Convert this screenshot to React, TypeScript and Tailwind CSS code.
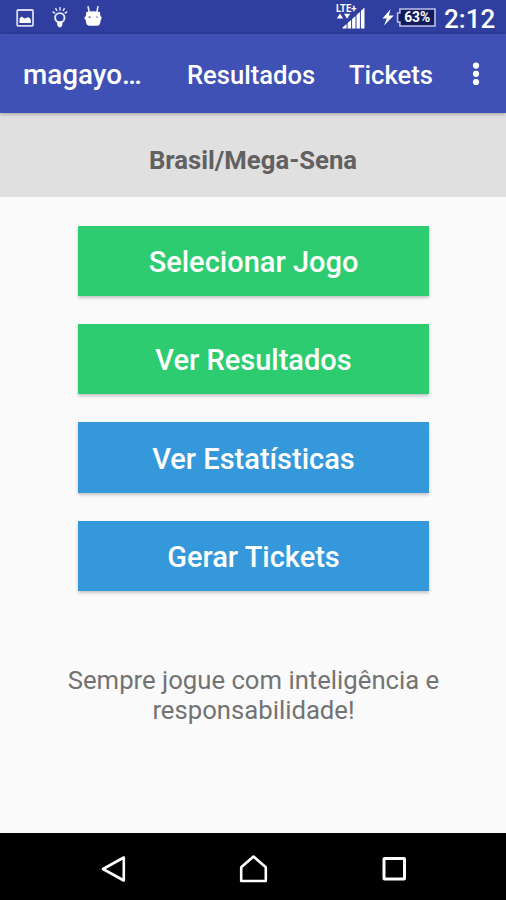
const actions = [
  { label: 'Selecionar Jogo', color: 'bg-[#2ecc71]' },
  { label: 'Ver Resultados', color: 'bg-[#2ecc71]' },
  { label: 'Ver Estatísticas', color: 'bg-[#3498db]' },
  { label: 'Gerar Tickets', color: 'bg-[#3498db]' },
]

function ImageIcon() {
  return (
    <svg className="w-[18px] h-[18px] mt-[9px]" viewBox="0 0 18 18" fill="none">
      <rect x="1.2" y="1" width="15.8" height="15.8" rx="0.8" stroke="#d8d9ef" strokeWidth="1.8" />
      <path d="M3.5 14V9.6L5.8 7.4L8.3 9.6L11.4 8.6L13 8.2L14.8 10.6V14Z" fill="#fff" />
    </svg>
  )
}

function BulbIcon() {
  return (
    <svg className="w-4 h-[22px] mt-[6px]" viewBox="0 0 16 22" fill="none" stroke="#e6ebff">
      <circle cx="7.8" cy="11.8" r="4.7" strokeWidth="1.9" />
      <path d="M8 1V4.4M3.5 2.2L5 5M12.5 2.2L11 5M0.6 5.6L3 7.4M15.2 5.6L12.8 7.4" strokeWidth="1.4" />
      <path d="M5.2 15.5H10.4V19L9 21.2H6.8L5.2 19Z" fill="#fff" stroke="none" />
    </svg>
  )
}

function RobotIcon() {
  return (
    <svg className="w-[18px] h-[22px] mt-[5px]" viewBox="0 0 18 22" fill="none">
      <path d="M4 1.2L5.2 7M14 1.2L12.9 7" stroke="#e6ebff" strokeWidth="1.6" />
      <path
        d="M2.3 7Q9 5.6 16 7L16.4 11Q17.8 11.6 17.6 13.5L16.6 15.5Q16.4 20.8 13 20.8H5.6Q2 20.8 1.8 15.5L0.5 13.5Q0.3 11.6 1.9 11Z"
        fill="#fff"
      />
      <path d="M4.6 12.2H6.4M12.4 12.2H13.6" stroke="#303f9f" strokeWidth="1.3" />
    </svg>
  )
}

function SignalIcon() {
  return (
    <svg className="w-[30px] h-7 mt-[2px]" viewBox="0 0 30 28" fill="#fff">
      <text x="0" y="9.8" fontSize="10.5" fontWeight="700" fontFamily="Roboto, sans-serif" textLength="20.5" lengthAdjust="spacingAndGlyphs">
        LTE+
      </text>
      <path d="M0.8 16.6L4 11.6L7.2 16.6ZM8 11.8L14.2 11.8L11.1 16.8Z" />
      <path d="M6.5 26.5V25.6L10.6 22V26.5ZM11.6 26.5V21.1L15.1 18V26.5ZM16.1 26.5V17.1L19.5 14V26.5ZM20.5 26.5V13.1L23.9 10V26.5ZM24.9 26.5V9L28.5 5.6V26.5Z" />
    </svg>
  )
}

function BatteryIcon() {
  return (
    <svg className="w-[55px] h-5 mt-[7px]" viewBox="0 0 55 20" fill="none">
      <path d="M9.6 2.2L1.4 11.4H5.8L3 18.6L12.8 8.4H7.8Z" fill="#fff" />
      <path d="M18.9 2H54V19H18.9V15H16.6V6H18.9Z" fill="#141b5c" stroke="#b9c1ea" strokeWidth="1.6" />
      <text
        x="36.2"
        y="15.2"
        fill="#fff"
        fontSize="13.8"
        fontWeight="700"
        fontFamily="Roboto, sans-serif"
        textAnchor="middle"
      >
        63%
      </text>
    </svg>
  )
}

function StatusBar() {
  return (
    <div className="flex items-start h-[34px] bg-[#303f9f] pl-4 pr-[10px]">
      <ImageIcon />
      <div className="w-[18px]" />
      <BulbIcon />
      <div className="w-4" />
      <RobotIcon />
      <div className="flex-1" />
      <SignalIcon />
      <div className="w-[15px]" />
      <BatteryIcon />
      <span className="ml-2 mt-[2px] w-[52px] text-[26px] leading-[34px] font-medium text-white whitespace-nowrap">
        2:12
      </span>
    </div>
  )
}

function AppBar() {
  return (
    <header className="relative flex items-center h-[79px] bg-[#3f51b5] pl-[23px] text-white shadow-[0_1px_4px_rgba(0,0,0,0.3)]">
      <h1 className="w-[164px] text-[27.8px] leading-8 font-medium pt-[3px]">magayo…</h1>
      <span className="w-[162px] text-[25.6px] leading-8 font-medium pt-[3px]">Resultados</span>
      <span className="w-[123px] text-[25.6px] leading-8 font-medium pt-[3px]">Tickets</span>
      <svg className="w-2 h-6" viewBox="0 0 8 24" fill="#fff">
        <circle cx="4" cy="3.6" r="3.1" />
        <circle cx="4" cy="11.8" r="3.1" />
        <circle cx="4" cy="20" r="3.1" />
      </svg>
    </header>
  )
}

function NavBar() {
  return (
    <nav className="flex items-center h-[67px] bg-black pl-[99px] pr-[97px] pt-1 justify-between">
      <svg className="w-[30px] h-[30px]" viewBox="0 0 30 30" fill="none" stroke="#fff" strokeWidth="2.6">
        <path d="M24.8 3.5V26.5L4 15Z" strokeLinejoin="round" />
      </svg>
      <svg className="w-[30px] h-[30px]" viewBox="0 0 30 30" fill="none" stroke="#fff" strokeWidth="2.6">
        <path d="M2.2 13.2L14.5 2.5L26.8 13.2V27H2.2Z" strokeLinejoin="round" />
      </svg>
      <svg className="w-[30px] h-[30px]" viewBox="0 0 30 30" fill="none" stroke="#fff" strokeWidth="3">
        <rect x="5" y="4.5" width="20.5" height="20.5" rx="0.5" />
      </svg>
    </nav>
  )
}

export default function App() {
  return (
    <div className="flex flex-col w-[506px] h-[900px] bg-[#fafafa] font-[Roboto,sans-serif] overflow-hidden">
      <StatusBar />
      <AppBar />
      <div className="flex items-center justify-center h-[84px] bg-[#e0e0e0] pt-[9px]">
        <h2 className="text-[25.7px] leading-8 font-bold text-[#616161]">Brasil/Mega-Sena</h2>
      </div>

      <main className="flex flex-col flex-1 items-center pt-[28.5px] pl-px">
        <div className="flex flex-col gap-7">
          {actions.map((action) => (
            <button
              key={action.label}
              className={`w-[351.5px] h-[70.4px] pt-[4px] text-[29px] font-medium text-white shadow-[0_2px_3px_rgba(0,0,0,0.22)] ${action.color}`}
            >
              {action.label}
            </button>
          ))}
        </div>
        <p className="mt-[73.5px] w-[400px] text-center text-[25.7px] leading-[30px] text-[#737373]">
          Sempre jogue com inteligência e responsabilidade!
        </p>
      </main>

      <NavBar />
    </div>
  )
}
